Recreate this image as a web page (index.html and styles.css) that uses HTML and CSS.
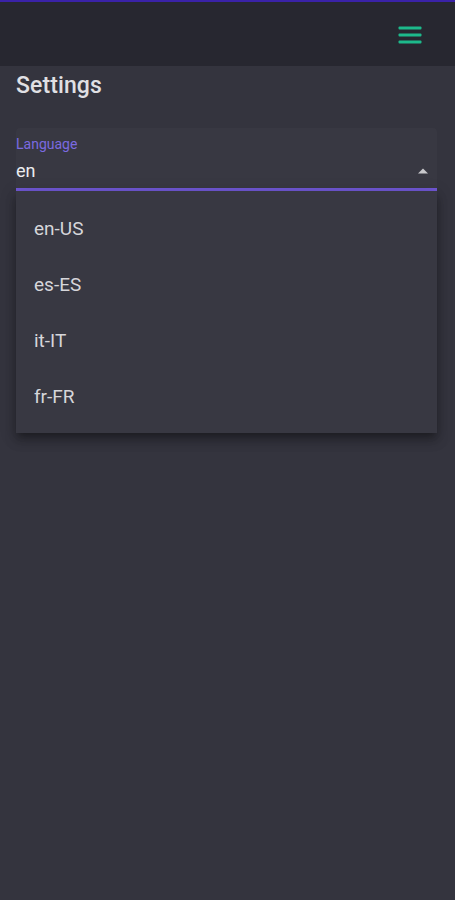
FILE: index.html
```html
<!DOCTYPE html>
<html>
<head>
<meta charset="utf-8">
<link rel="stylesheet" href="styles.css">
</head>
<body>
<div class="topline"></div>
<header class="appbar">
  <svg class="menu-icon" width="24" height="24" viewBox="0 0 24 24">
    <rect x="0.5" y="3.5" width="23" height="3" rx="1" fill="#1db98b"/>
    <rect x="0.5" y="10.5" width="23" height="3" rx="1" fill="#1db98b"/>
    <rect x="0.5" y="17.5" width="23" height="3" rx="1" fill="#1db98b"/>
  </svg>
</header>
<main class="content">
  <h1 class="title">Settings</h1>
  <div class="field">
    <div class="label">Language</div>
    <div class="value-row">
      <span class="value">en</span>
      <svg class="arrow" width="12" height="8" viewBox="0 0 12 8"><path d="M1 6.5 L6 1.5 L11 6.5 Z" fill="#c8c8cc"/></svg>
    </div>
    <div class="underline"></div>
    <ul class="menu">
      <li>en-US</li>
      <li>es-ES</li>
      <li>it-IT</li>
      <li>fr-FR</li>
    </ul>
  </div>
</main>
</body>
</html>
```
FILE: styles.css
```css
html, body {
  margin: 0;
  padding: 0;
}
body {
  background: #34343e;
  font-family: Roboto, "Liberation Sans", sans-serif;
  width: 455px;
  height: 900px;
  overflow: hidden;
}
.topline {
  height: 2px;
  background: #3a22a8;
}
.appbar {
  height: 64px;
  background: #272730;
  display: flex;
  align-items: center;
  justify-content: flex-end;
  padding-right: 33px;
  box-sizing: border-box;
}
.menu-icon {
  display: block;
  margin-top: 1px;
}
.content {
  padding: 0 18px 0 16px;
}
.title {
  margin: 0;
  padding-top: 6px;
  font-size: 23px;
  font-weight: 500;
  color: #e0e0e4;
  line-height: 28px;
  letter-spacing: 0.1px;
}
.field {
  position: relative;
  margin-top: 28px;
  background: #383842;
  border-radius: 4px 4px 0 0;
}
.label {
  padding-top: 8px;
  font-size: 14px;
  line-height: 16px;
  color: #7b6ae0;
}
.value-row {
  display: flex;
  align-items: center;
  justify-content: space-between;
  height: 36px;
  padding-right: 8px;
}
.value {
  font-size: 18px;
  color: #ececf0;
}
.arrow {
  display: block;
  margin-top: 2px;
}
.underline {
  height: 3px;
  background: #7158d6;
}
.menu {
  position: absolute;
  left: 0;
  right: 0;
  top: 100%;
  margin: 0;
  padding: 10px 0 8px;
  list-style: none;
  background: #383842;
  box-shadow: 0 5px 6px -3px rgba(0,0,0,0.25), 0 8px 10px 1px rgba(0,0,0,0.18), 0 3px 14px 2px rgba(0,0,0,0.15);
}
.menu li {
  height: 56px;
  line-height: 56px;
  padding-left: 18px;
  font-size: 19px;
  color: #d6d6da;
}
```
